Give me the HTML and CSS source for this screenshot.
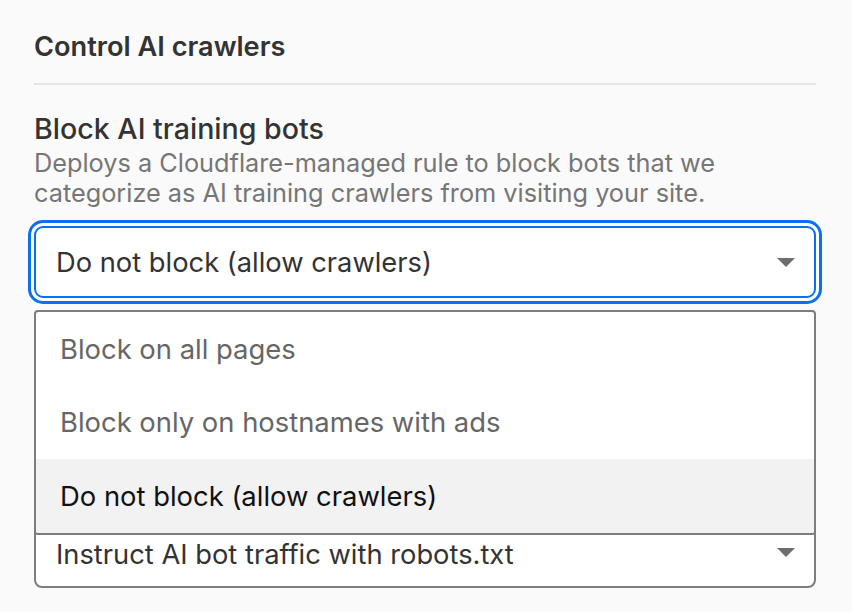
FILE: index.html
```html
<!DOCTYPE html>
<html lang="en">
  <head>
    <meta charset="UTF-8" />
    <meta name="viewport" content="width=device-width, initial-scale=1.0" />
    <title>Control AI crawlers</title>
    <link rel="stylesheet" href="styles.css">
  </head>
  <body>
    <div class="panel">
      <div class="panel-title">Control AI crawlers</div>
      <div class="divider"></div>

      <div class="field">
        <div class="field-title">Block AI training bots</div>
        <div class="field-desc">
          Deploys a Cloudflare-managed rule to block bots that we
          categorize as AI training crawlers from visiting your site.
        </div>
        <div class="select-wrap">
          <div class="select is-focused">
            <span class="select-value">Do not block (allow crawlers)</span>
            <span class="select-arrow"></span>
          </div>
          <ul class="menu">
            <li class="menu-item">Block on all pages</li>
            <li class="menu-item">Block only on hostnames with ads</li>
            <li class="menu-item is-selected">Do not block (allow crawlers)</li>
          </ul>
        </div>
      </div>

      <!-- label + help text of this field sit under the open menu -->
      <div class="field field-robots">
        <div class="select">
          <span class="select-value">Instruct AI bot traffic with robots.txt</span>
          <span class="select-arrow"></span>
        </div>
      </div>
    </div>
  </body>
</html>
```

FILE: styles.css
```css
* {
  margin: 0;
  padding: 0;
  box-sizing: border-box;
}

body {
  font-family: Inter, "Noto Sans", sans-serif;
  background-color: #fafafa;
  color: #333;
}

.panel {
  padding: 28px 36px 0 34px;
}

.panel-title {
  font-size: 27.2px;
  line-height: 38px;
  font-weight: 600;
  color: #333;
}

.divider {
  height: 2px;
  margin-top: 17px;
  background-color: #e4e4e4;
}

.field {
  margin-top: 28px;
}

.field-title {
  font-size: 28.6px;
  line-height: 32px;
  font-weight: 500;
  color: #333;
}

.field-desc {
  margin-top: 3px;
  font-size: 25.3px;
  line-height: 30px;
  color: #767676;
}

.select-wrap {
  position: relative;
}

.select {
  display: flex;
  align-items: center;
  justify-content: space-between;
  height: 72px;
  margin-top: 18px;
  padding: 0 19px 0 20px;
  background-color: #fff;
  border: 2px solid #7d7d7d;
  border-radius: 8px;
}

.select.is-focused {
  border-color: #0b6ff0;
  box-shadow: 0 0 0 3px #fff, 0 0 0 6px #0b6ff0;
  border-radius: 9px;
}

.select-value {
  font-size: 27.3px;
  color: #333;
}

.select-arrow {
  width: 0;
  height: 0;
  border-left: 9px solid transparent;
  border-right: 9px solid transparent;
  border-top: 9px solid #6e6e6e;
}

.menu {
  position: absolute;
  top: calc(100% + 12px);
  left: 0;
  right: 0;
  z-index: 2;
  list-style: none;
  background-color: #fff;
  border: 2px solid #7d7d7d;
  border-radius: 4px;
  overflow: hidden;
}

.menu-item {
  height: 73.5px;
  display: flex;
  align-items: center;
  padding-left: 24px;
  font-size: 27.4px;
  color: #666;
}

.menu-item.is-selected {
  background-color: #f2f2f2;
  color: #111;
}

.field-robots .select {
  margin-top: 218px;
}

.field-robots .select-value {
  padding-top: 4px;
}
```
